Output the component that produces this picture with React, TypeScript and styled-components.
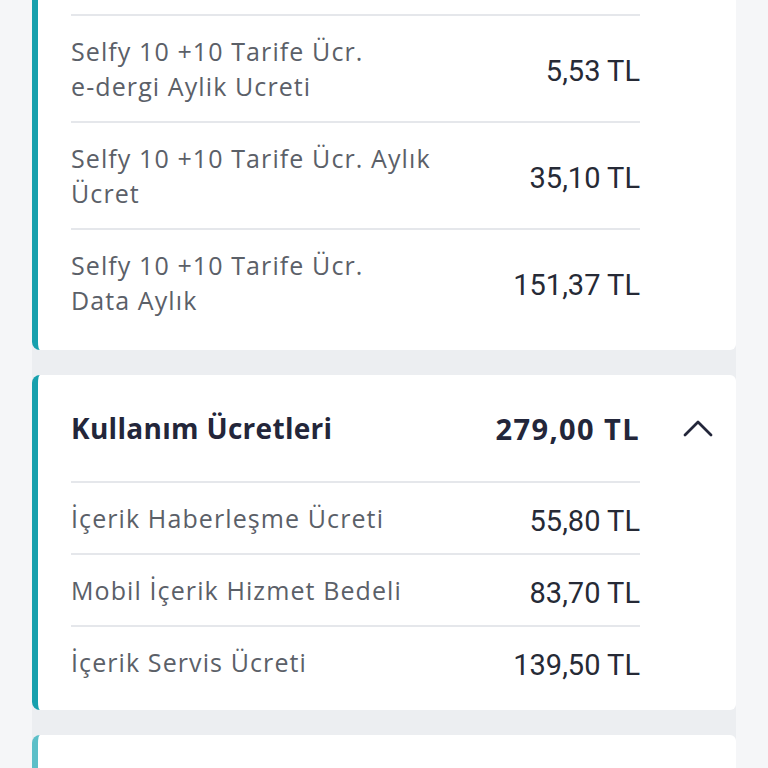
import React from "react";
import styled, { createGlobalStyle } from "styled-components";

const Global = createGlobalStyle`
  html, body { margin: 0; padding: 0; background: #f5f6f8; }
  body { font-family: "Open Sans", Lato, sans-serif; }
`;

const Page = styled.div`
  width: 768px;
  height: 768px;
  overflow: hidden;
  background: #f5f6f8;
`;

const Stack = styled.div`
  margin-left: 32px;
  width: 704px;
  display: flex;
  flex-direction: column;
  gap: 25px;
  background: #eceef1;
`;

const Card = styled.section<{ $accent: string; $clipTop?: boolean }>`
  background: #ffffff;
  border-left: 6px solid ${(p) => p.$accent};
  border-radius: ${(p) => (p.$clipTop ? "0 0 6px 8px" : "8px 6px 6px 8px")};
  padding: ${(p) => (p.$clipTop ? "14px 23px 15px 33px" : "0 23px 13px 33px")};
  min-height: 40px;
`;

const Header = styled.div`
  display: flex;
  align-items: center;
  height: 106px;
`;

const Title = styled.div`
  flex: 1;
  font-family: "Open Sans", Lato, sans-serif;
  font-weight: 700;
  font-size: 28px;
  letter-spacing: 0.3px;
  color: #23263a;
`;

const Total = styled.div`
  font-family: "Open Sans", Lato, sans-serif;
  font-weight: 700;
  font-size: 29px;
  letter-spacing: 1.4px;
  color: #23263a;
`;

const Chevron = styled.div`
  width: 30px;
  margin-left: 43px;
  display: flex;
  align-items: center;
  justify-content: center;
`;

const List = styled.div`
  margin-right: 73px;
`;

const Row = styled.div`
  display: flex;
  align-items: center;
  justify-content: space-between;
  gap: 24px;
  padding: 17.5px 0;
  border-top: 2px solid #e5e7eb;
`;

const Label = styled.div`
  font-family: "Open Sans", Lato, sans-serif;
  font-size: 25px;
  letter-spacing: 1.1px;
  line-height: 35px;
  color: #5b6068;
  max-width: 380px;
`;

const Amount = styled.div`
  font-family: Roboto, "Liberation Sans", sans-serif;
  font-size: 29px;
  line-height: 35px;
  margin: 3px 0 -3px;
  color: #262a36;
  white-space: nowrap;
`;

const first = [
  ["Selfy 10 +10 Tarife Ücr.\ne-dergi Aylik Ucreti", "5,53 TL"],
  ["Selfy 10 +10 Tarife Ücr. Aylık\nÜcret", "35,10 TL"],
  ["Selfy 10 +10 Tarife Ücr.\nData Aylık", "151,37 TL"],
];

const usage = [
  ["İçerik Haberleşme Ücreti", "55,80 TL"],
  ["Mobil İçerik Hizmet Bedeli", "83,70 TL"],
  ["İçerik Servis Ücreti", "139,50 TL"],
];

function Lines({ text }: { text: string }) {
  const parts = text.split("\n");
  return (
    <>
      {parts.map((t, i) => (
        <React.Fragment key={i}>
          {t}
          {i < parts.length - 1 && <br />}
        </React.Fragment>
      ))}
    </>
  );
}

export default function App() {
  return (
    <Page>
      <Global />
      <Stack>
        <Card $accent="#17a0ad" $clipTop>
          <List>
            {first.map(([l, a]) => (
              <Row key={l}>
                <Label>
                  <Lines text={l} />
                </Label>
                <Amount>{a}</Amount>
              </Row>
            ))}
          </List>
        </Card>
        <Card $accent="#17a0ad">
          <Header>
            <Title>Kullanım Ücretleri</Title>
            <Total>279,00 TL</Total>
            <Chevron>
              <svg width="30" height="18" viewBox="0 0 30 18" fill="none">
                <path d="M2 16 L15 3 L28 16" stroke="#23263a" strokeWidth="2.8" strokeLinecap="round" strokeLinejoin="round" />
              </svg>
            </Chevron>
          </Header>
          <List>
            {usage.map(([l, a]) => (
              <Row key={l}>
                <Label>{l}</Label>
                <Amount>{a}</Amount>
              </Row>
            ))}
          </List>
        </Card>
        <Card $accent="#5cbfc8">
          <Header />
        </Card>
      </Stack>
    </Page>
  );
}
